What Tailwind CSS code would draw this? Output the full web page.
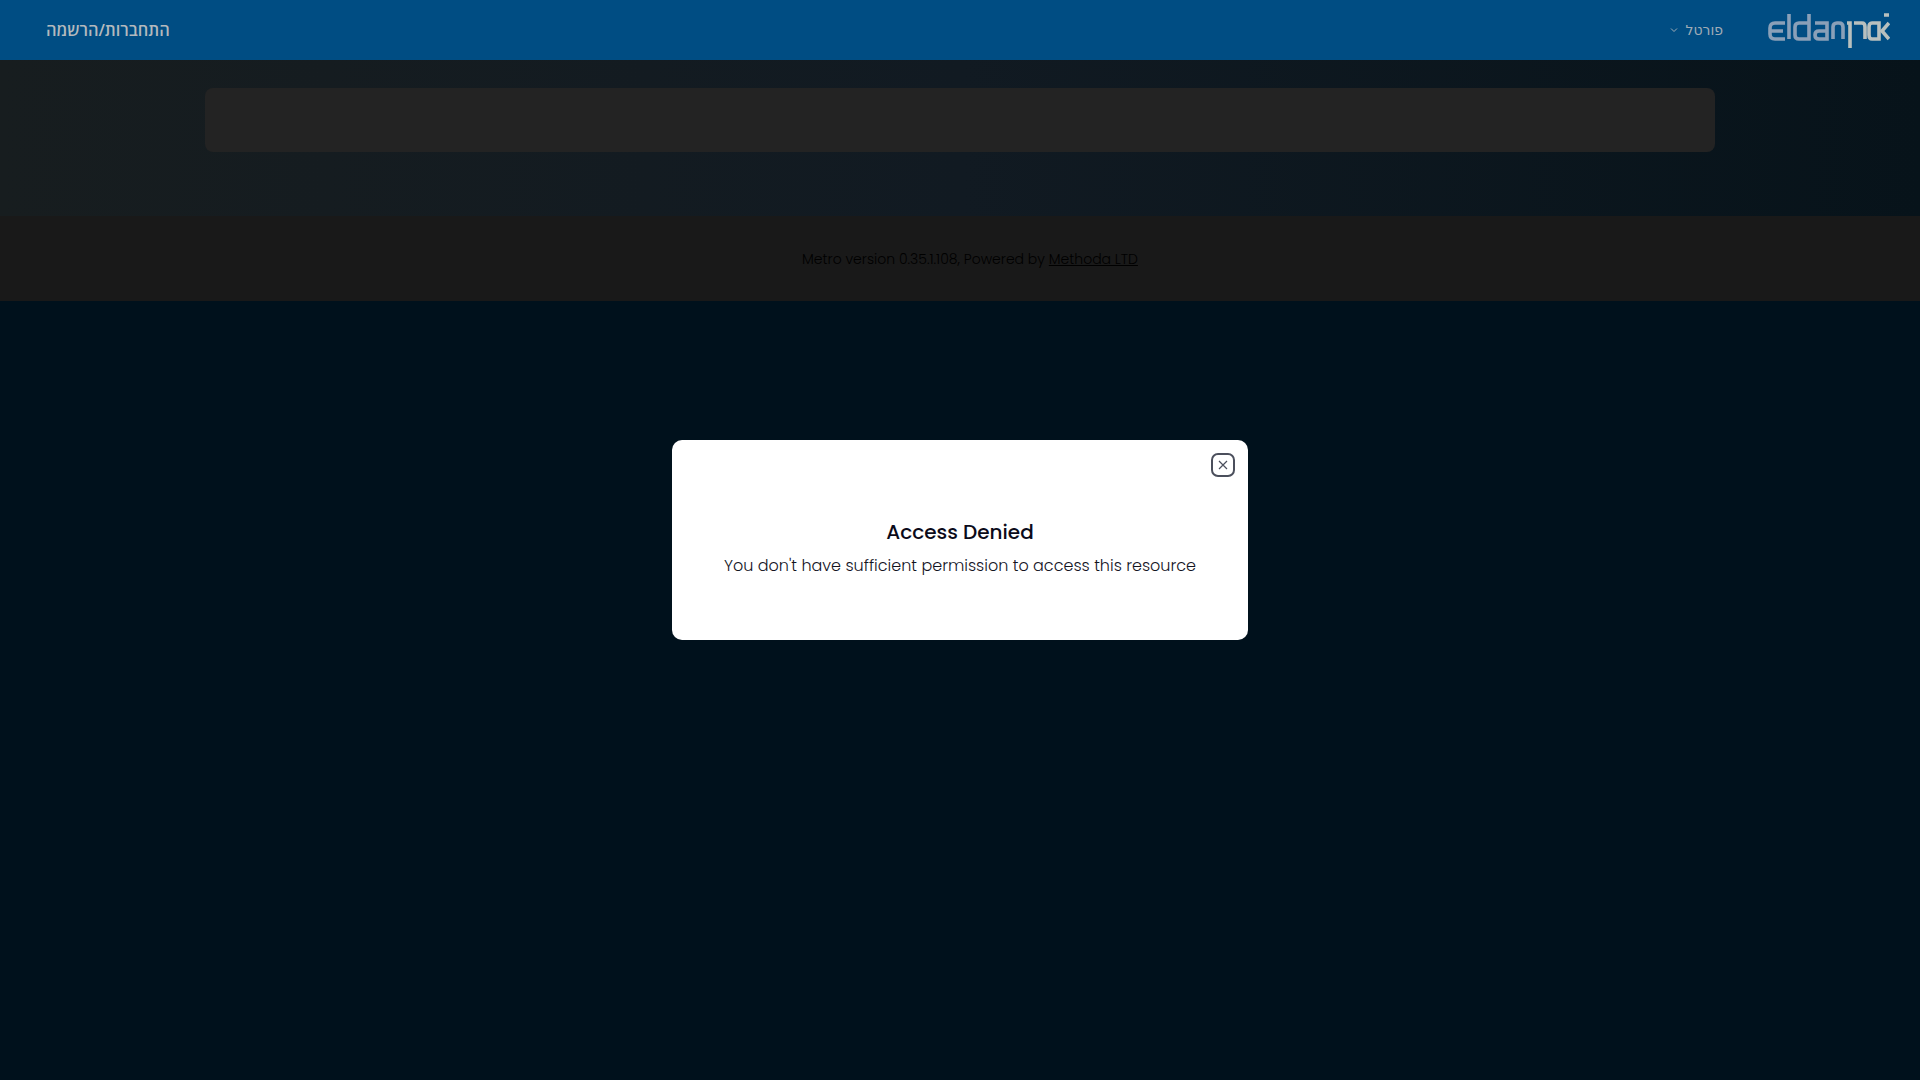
<!DOCTYPE html>
<html lang="en">
<head>
    <meta charset="UTF-8">
    <title>Access Denied</title>
    <script src="https://cdn.jsdelivr.net/npm/@tailwindcss/browser@4"></script>
</head>
<body class="bg-[#00111c] h-screen overflow-hidden font-['Poppins','Open_Sans',sans-serif]">
    <header class="bg-[#004d83] h-[60px] flex items-center justify-between pl-[46px] pr-[30px]">
        <span dir="rtl" class="text-[#b4b9bd] text-[16.4px] font-semibold font-['Open_Sans',sans-serif]">התחברות/הרשמה</span>
        <div class="flex items-center gap-[45px]">
            <div class="flex items-center gap-[8px] text-[#a0acb6]">
                <svg class="w-[8px] h-[8px]" viewBox="0 0 8 8" fill="none" stroke="currentColor" stroke-width="1"><path d="M1 2.5 L4 5.5 L7 2.5"/></svg>
                <span dir="rtl" class="text-sm font-['DejaVu_Sans',sans-serif]">פורטל</span>
            </div>
            <svg class="w-[122px] h-[40px] blur-[0.6px]" viewBox="0 0 122 40" fill="none" stroke-width="3.6">
                <g stroke="#8aa0b8">
                    <path d="M17 13 H7 Q2 13 2 18 V24 Q2 29 7 29 H17 M3 21 H15"/>
                    <path d="M21 4 V29"/>
                    <path d="M41 4 V29 H31 Q27 29 27 25 V17 Q27 13 31 13 H41"/>
                    <path d="M47 13 H59 V29 H51 Q47 29 47 25 Q47 21 51 21 H59"/>
                    <path d="M65 29 V17 Q65 13 69 13 H71 Q75 13 75 17 V29"/>
                </g>
                <g stroke="#b8c0be">
                    <path d="M79 13 H82 V38"/>
                    <path d="M86 13 H94 Q97 13 97 17 V29"/>
                    <path d="M104 13 H111 V29 H104 Q101 29 101 25 V17 Q101 13 104 13"/>
                    <path d="M121 5 H116 M121 13 L114 21 L121 29"/>
                </g>
            </svg>
        </div>
    </header>
    <main class="h-[156px] pt-[28px] bg-gradient-to-r from-[#171d1f] via-[#111a22] to-[#07131a]">
        <div class="mx-auto w-[1510px] h-[64px] rounded-lg bg-[#232323]"></div>
    </main>
    <footer class="h-[85px] bg-[#191919] flex items-center justify-center pl-[20px] text-sm font-light text-black">Metro version 0.35.1.108, Powered by&nbsp;<a class="underline">Methoda LTD</a></footer>
    <div class="fixed inset-0 flex items-center justify-center">
        <div class="relative w-[576px] h-[200px] bg-white rounded-[10px] flex flex-col items-center pt-[78px]">
            <button class="absolute top-[13px] right-[13px] w-[24px] h-[24px] rounded-[7px] border-2 border-[#4b4f5c] flex items-center justify-center">
                <svg class="w-[12px] h-[12px]" viewBox="0 0 12 12" fill="none" stroke="#4b4f5c" stroke-width="1.2"><path d="M2 2 L10 10 M10 2 L2 10"/></svg>
            </button>
            <h2 class="text-xl font-medium text-[#0b0b1a]">Access Denied</h2>
            <p class="text-base font-light text-[#14141f] mt-[8px]">You don't have sufficient permission to access this resource</p>
        </div>
    </div>
</body>
</html>
